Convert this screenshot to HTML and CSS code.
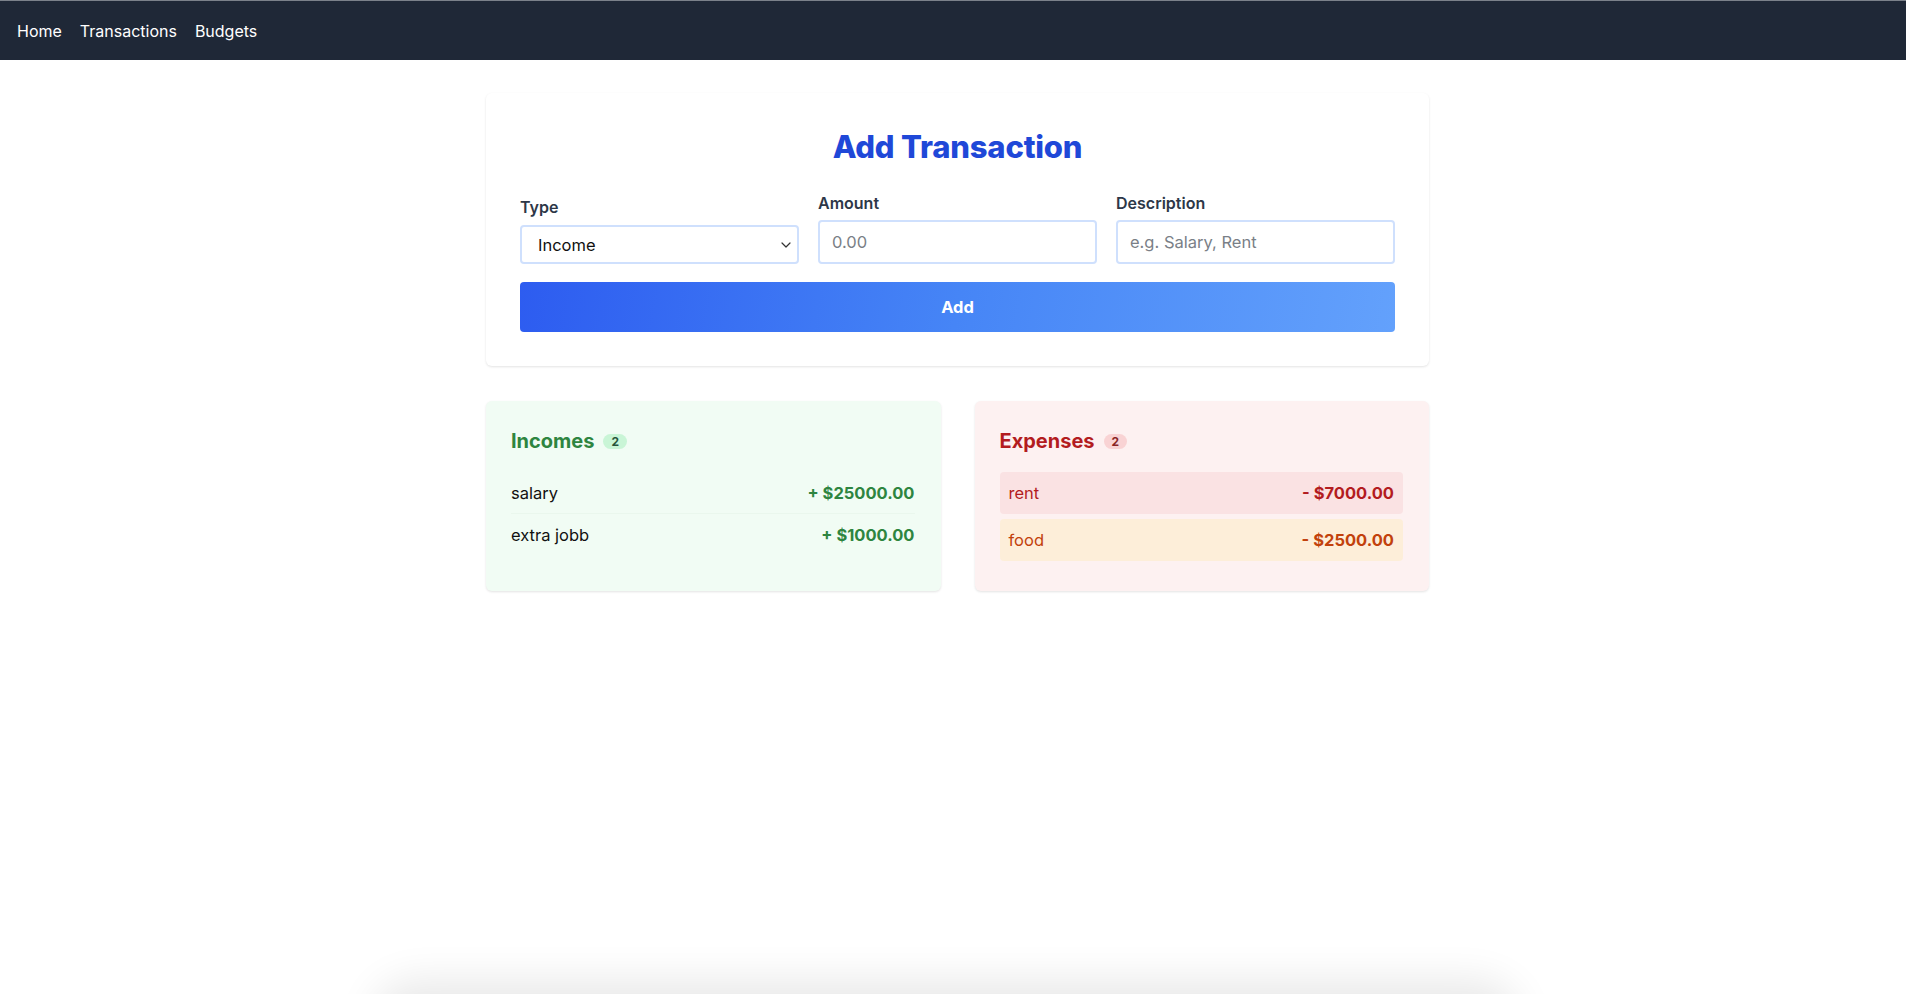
FILE: index.html
```html
<!DOCTYPE html>
<html lang="en">
<head>
<meta charset="utf-8">
<title>Add Transaction</title>
<link rel="stylesheet" href="styles.css">
</head>
<body>
<nav class="nav">
  <a class="nav-link" href="#">Home</a>
  <a class="nav-link" href="#">Transactions</a>
  <a class="nav-link" href="#">Budgets</a>
</nav>
<main class="page">
  <section class="card form-card">
    <h1 class="form-title">Add Transaction</h1>
    <div class="fields">
      <div class="field field-select">
        <label class="label" for="type">Type</label>
        <select id="type" class="select">
          <option>Income</option>
          <option>Expense</option>
        </select>
      </div>
      <div class="field">
        <label class="label" for="amount">Amount</label>
        <input id="amount" class="input" type="text" placeholder="0.00">
      </div>
      <div class="field">
        <label class="label" for="desc">Description</label>
        <input id="desc" class="input" type="text" placeholder="e.g. Salary, Rent">
      </div>
    </div>
    <button class="add-btn" type="button">Add</button>
  </section>
  <div class="lists">
    <section class="card list-card incomes">
      <h2 class="list-title">Incomes <span class="badge">2</span></h2>
      <ul class="rows">
        <li class="row"><span class="row-name">salary</span><span class="row-amount">+ $25000.00</span></li>
        <li class="row"><span class="row-name">extra jobb</span><span class="row-amount">+ $1000.00</span></li>
      </ul>
    </section>
    <section class="card list-card expenses">
      <h2 class="list-title">Expenses <span class="badge">2</span></h2>
      <ul class="rows">
        <li class="row row-red"><span class="row-name">rent</span><span class="row-amount">- $7000.00</span></li>
        <li class="row row-orange"><span class="row-name">food</span><span class="row-amount">- $2500.00</span></li>
      </ul>
    </section>
  </div>
</main>
<div class="bottom-shade" aria-hidden="true"></div>
</body>
</html>
```

FILE: styles.css
```css
* { box-sizing: border-box; }

html, body {
  margin: 0;
  padding: 0;
  background: #ffffff;
}

body {
  font-family: Inter, "Noto Sans", "Liberation Sans", sans-serif;
  color: #111827;
  overflow: hidden;
  height: 994px;
}

.nav {
  height: 60px;
  background: #1f2837;
  border-top: 1px solid #7b818a;
  display: flex;
  align-items: center;
  gap: 18px;
  padding: 0 17px;
}

.nav-link {
  color: #ffffff;
  text-decoration: none;
  font-size: 16px;
  line-height: 20px;
}

.page {
  width: 943px;
  margin: 33px 0 0 486px;
}

.card {
  border-radius: 6px;
  box-shadow: 0 1px 3px rgba(0, 0, 0, 0.08), 0 1px 2px rgba(0, 0, 0, 0.04);
}

.form-card {
  background: #ffffff;
  padding: 36px 34px 34px;
}

.form-title {
  margin: 0 0 28px;
  text-align: center;
  font-size: 31px;
  line-height: 36px;
  font-weight: 800;
  color: #1f48d8;
  letter-spacing: -0.2px;
}

.fields {
  display: grid;
  grid-template-columns: repeat(3, minmax(0, 1fr));
  column-gap: 19px;
  align-items: end;
}

.field {
  display: flex;
  flex-direction: column;
  min-width: 0;
}

.label {
  font-size: 16px;
  line-height: 20px;
  font-weight: 600;
  color: #2d3748;
  margin-bottom: 7px;
}

.field-select .label {
  margin-bottom: 8px;
}

.input,
.select {
  width: 100%;
  min-width: 0;
  font-family: inherit;
  font-size: 16.5px;
  color: #111111;
  background: #ffffff;
  border: 2px solid #cfe0fd;
  border-radius: 4px;
  outline: none;
}

.input {
  height: 44px;
  padding: 0 12px;
}

.input::placeholder {
  color: #7a7f87;
}

.select {
  height: 39px;
  padding: 0 30px 0 16px;
  appearance: none;
  -webkit-appearance: none;
  background-image: url("data:image/svg+xml,%3Csvg xmlns='http://www.w3.org/2000/svg' width='10' height='6' viewBox='0 0 10 6'%3E%3Cpath d='M1 1l4 4 4-4' fill='none' stroke='%23333' stroke-width='1.2' stroke-linecap='round' stroke-linejoin='round'/%3E%3C/svg%3E");
  background-repeat: no-repeat;
  background-position: right 6px center;
  background-size: 10px 6px;
}

.add-btn {
  display: block;
  width: 100%;
  height: 50px;
  margin-top: 18px;
  border: none;
  border-radius: 4px;
  background: linear-gradient(100deg, #2d5cf0 0%, #4685f6 50%, #63a1fc 100%);
  color: #ffffff;
  font-family: inherit;
  font-size: 16.5px;
  font-weight: 700;
  cursor: pointer;
}

.lists {
  display: grid;
  grid-template-columns: 1fr 1fr;
  column-gap: 34px;
  margin-top: 35px;
}

.list-card {
  padding: 26px 26px 30px 25px;
  min-height: 189px;
}

.incomes { background: #f1fcf4; }
.expenses { background: #fdf1f1; }

.list-title {
  margin: 0 0 17px;
  font-size: 20px;
  line-height: 28px;
  font-weight: 700;
  display: flex;
  align-items: center;
  gap: 9px;
}

.incomes .list-title { color: #2e8540; }
.expenses .list-title { color: #b31c1f; }

.badge {
  display: inline-block;
  font-size: 12px;
  line-height: 15px;
  font-weight: 700;
  padding: 0 8px;
  border-radius: 8px;
  margin-top: 1px;
}

.incomes .badge { background: #c9f5d6; color: #27543a; }
.expenses .badge { background: #f9d3d4; color: #8a2424; }

.rows {
  list-style: none;
  margin: 0;
  padding: 0;
  display: flex;
  flex-direction: column;
}

.row {
  display: flex;
  justify-content: space-between;
  align-items: center;
  font-size: 16.5px;
}

.row-amount { font-weight: 700; }

.incomes .row {
  height: 42px;
  border-bottom: 1px solid #eaf7ed;
}

.incomes .row:last-child { border-bottom: none; }

.incomes .row-name { color: #111111; }
.incomes .row-amount { color: #2e8540; }

.expenses .rows { gap: 4px; }

.expenses .row {
  height: 42px;
  padding: 0 9px;
  border-radius: 4px;
}

.row-red { background: #fae2e3; color: #b31c1f; }
.row-orange { background: #fdeed9; color: #c2410c; margin-top: 1px; }

.bottom-shade {
  position: fixed;
  left: 50%;
  bottom: -60px;
  width: 1120px;
  height: 60px;
  margin-left: -567px;
  border-radius: 30px;
  background: #ffffff;
  box-shadow: 0 0 40px 14px rgba(0, 0, 0, 0.09);
}
```
